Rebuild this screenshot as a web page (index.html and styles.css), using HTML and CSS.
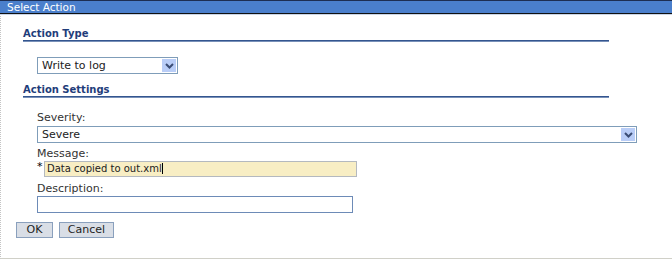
FILE: index.html
```html
<!DOCTYPE html>
<html>
<head>
<meta charset="utf-8">
<title>Select Action</title>
<link rel="stylesheet" href="styles.css">
</head>
<body>
<div class="dialog">
  <div class="titlebar">Select Action</div>
  <div class="content">
    <div class="section-head sh-first">Action Type</div>
    <div class="field">
      <div class="select select-type">
        <span class="select-text">Write to log</span>
        <span class="select-btn"><svg width="9" height="6" viewBox="0 0 9 6"><path d="M1 1 L4.5 4.5 L8 1" fill="none" stroke="#3b4d75" stroke-width="2"/></svg></span>
      </div>
    </div>
    <div class="section-head sh-second">Action Settings</div>
    <div class="field">
      <div class="label l-severity">Severity:</div>
      <div class="select select-sev">
        <span class="select-text">Severe</span>
        <span class="select-btn"><svg width="9" height="6" viewBox="0 0 9 6"><path d="M1 1 L4.5 4.5 L8 1" fill="none" stroke="#3b4d75" stroke-width="2"/></svg></span>
      </div>
      <div class="label l-message">Message:</div>
      <div class="req-row">
        <span class="req">*</span>
        <div class="input input-msg">Data copied to out.xml<span class="caret"></span></div>
      </div>
      <div class="label l-desc">Description:</div>
      <div class="input input-desc"></div>
    </div>
  </div>
  <div class="buttons">
    <button class="btn btn-ok">OK</button>
    <button class="btn btn-cancel">Cancel</button>
  </div>
</div>
</body>
</html>
```
FILE: styles.css
```css
html, body {
  margin: 0;
  padding: 0;
  background: #ffffff;
}
body {
  font-family: "DejaVu Sans", Verdana, sans-serif;
  font-size: 11px;
  color: #333333;
}
.dialog {
  width: 672px;
  height: 259px;
  box-sizing: border-box;
  border-left: 1px dotted #c4c4c4;
  border-bottom: 1px solid #d0d0c8;
}
.titlebar {
  margin-left: -1px;
  height: 12px;
  border-top: 1px solid #1d2e52;
  border-bottom: 1px solid #111111;
  box-shadow: 0 1px 0 #c9d5e6;
  background: #4a7fcc;
  color: #ffffff;
  font-size: 10.5px;
  line-height: 12px;
  padding-left: 7px;
}
.content {
  padding-left: 22px;
}
.section-head {
  width: 586px;
  height: 12px;
  line-height: 12px;
  font-size: 10px;
  font-weight: bold;
  color: #1f3d7a;
  border-bottom: 1px solid #34558f;
  box-shadow: 0 1px 0 #7890b8;
}
.sh-first { margin-top: 14px; }
.sh-second { margin-top: 10px; }
.field {
  padding-left: 14px;
}
.select {
  display: flex;
  align-items: center;
  box-sizing: border-box;
  height: 17px;
  border: 1px solid #7f9db9;
  background: #ffffff;
  color: #222222;
}
.select-type {
  width: 141px;
  margin-top: 16px;
}
.select-sev {
  width: 600px;
  margin-top: 1px;
}
.select-text {
  flex: 1;
  padding-left: 4px;
  line-height: 15px;
}
.select-btn {
  display: flex;
  align-items: center;
  justify-content: center;
  width: 14px;
  height: 13px;
  margin-right: 1px;
  background: #b9cdf7;
  box-sizing: border-box;
}
.label {
  line-height: 14px;
  color: #333333;
}
.l-severity { margin-top: 14px; }
.l-message { margin-top: 4px; }
.l-desc { margin-top: 5px; }
.req-row {
  display: flex;
  align-items: flex-start;
}
.req {
  width: 7px;
  color: #000000;
  font-size: 11px;
  line-height: 12px;
}
.input {
  box-sizing: border-box;
  color: #222222;
}
.input-msg {
  width: 313px;
  height: 16px;
  background: #f8eec4;
  border: 1px solid #b4b9bf;
  padding-left: 2px;
  font-size: 10px;
  line-height: 14px;
}
.caret {
  display: inline-block;
  width: 1px;
  height: 11px;
  background: #000000;
  vertical-align: -2px;
}
.input-desc {
  width: 316px;
  height: 17px;
  border: 1px solid #6d8bb7;
  background: #ffffff;
}
.buttons {
  display: flex;
  gap: 6px;
  padding-left: 15px;
  margin-top: 9px;
}
.btn {
  box-sizing: border-box;
  height: 16px;
  padding: 0;
  margin: 0;
  font-family: "DejaVu Sans", Verdana, sans-serif;
  font-size: 11px;
  line-height: 14px;
  color: #1e1e1e;
  background: #d9dee6;
  border: 1px solid #8aa0bd;
}
.btn-ok { width: 37px; }
.btn-cancel { width: 55px; }
```
